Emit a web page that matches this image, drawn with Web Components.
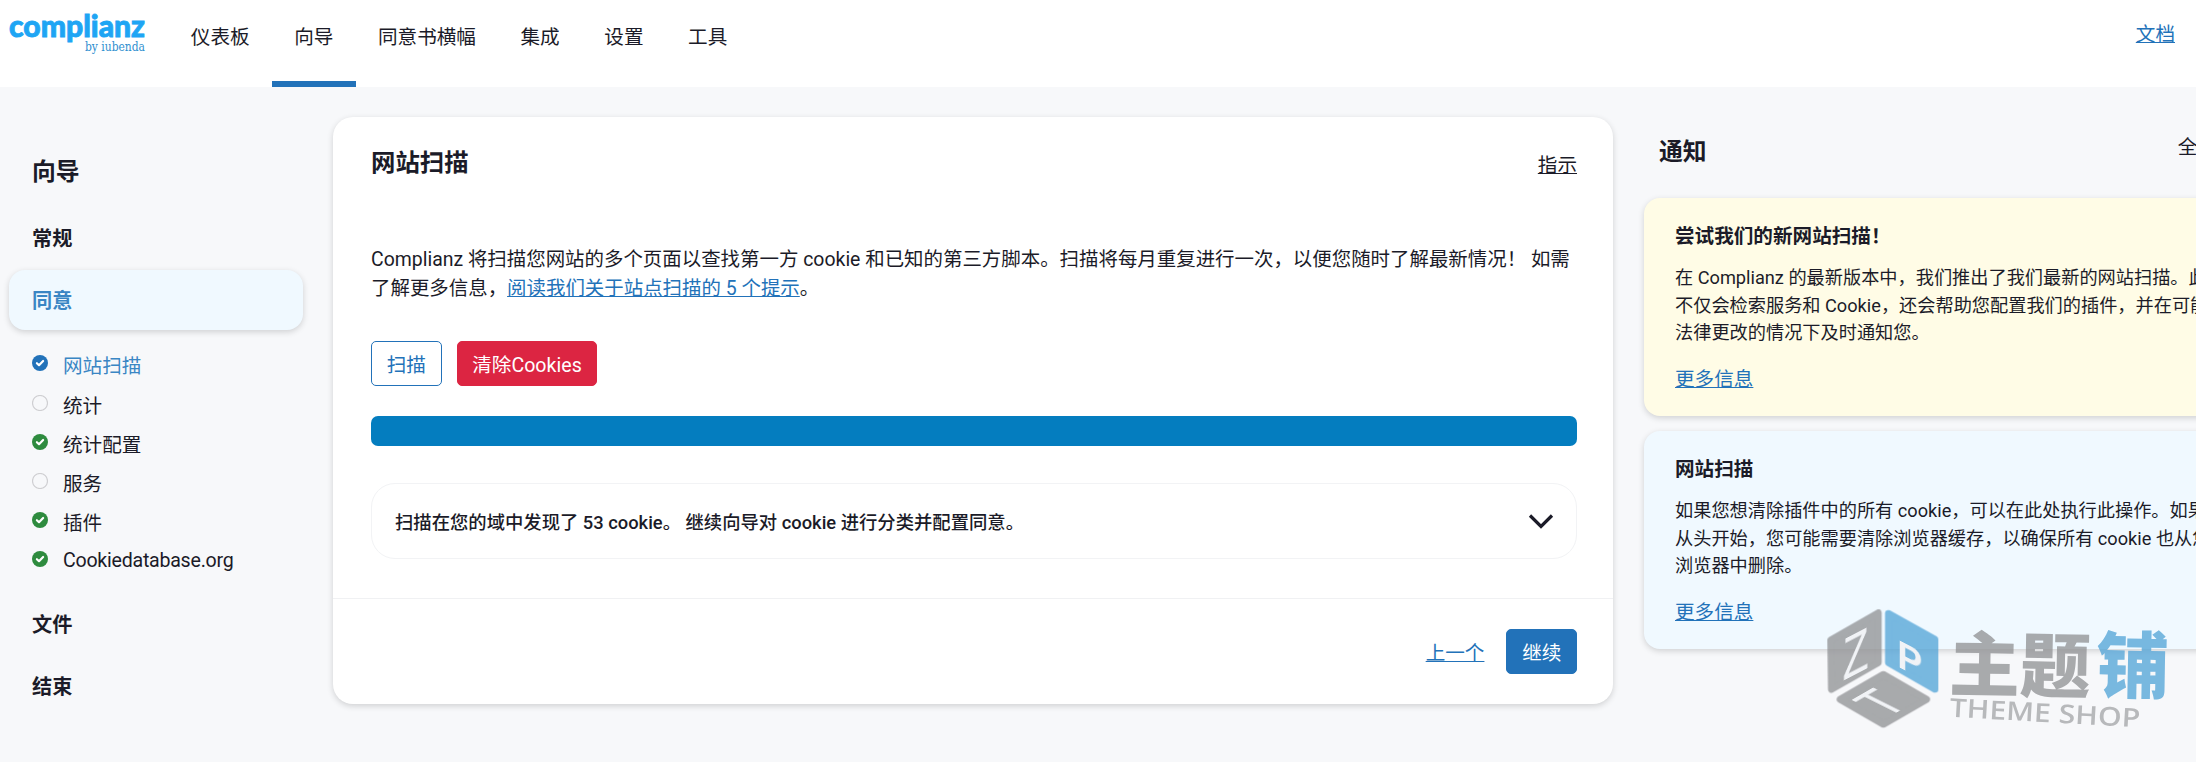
<!DOCTYPE html>
<html lang="zh-CN">
<head>
<meta charset="utf-8">
<title>Complianz</title>
<style>
html,body{margin:0;padding:0;height:762px;overflow:hidden;background:#f7f8fa}
body{font-family:Roboto,"Noto Sans CJK SC",sans-serif;color:#1b1b28;position:relative}
</style>
</head>
<body>
<cz-app>
  <cz-header>
    <cz-nav-item>仪表板</cz-nav-item>
    <cz-nav-item active>向导</cz-nav-item>
    <cz-nav-item>同意书横幅</cz-nav-item>
    <cz-nav-item>集成</cz-nav-item>
    <cz-nav-item>设置</cz-nav-item>
    <cz-nav-item>工具</cz-nav-item>
  </cz-header>
  <cz-layout>
    <cz-sidebar slot="left">
      <cz-menu-item>常规</cz-menu-item>
      <cz-menu-item active>同意</cz-menu-item>
      <cz-steps>
        <cz-step state="current">网站扫描</cz-step>
        <cz-step>统计</cz-step>
        <cz-step state="done">统计配置</cz-step>
        <cz-step>服务</cz-step>
        <cz-step state="done">插件</cz-step>
        <cz-step state="done" style="letter-spacing:-.25px">Cookiedatabase.org</cz-step>
      </cz-steps>
      <cz-menu-item>文件</cz-menu-item>
      <cz-menu-item>结束</cz-menu-item>
    </cz-sidebar>
    <cz-card slot="center">
      <cz-accordion>扫描在您的域中发现了 53 cookie。 继续向导对 cookie 进行分类并配置同意。</cz-accordion>
    </cz-card>
    <cz-notices slot="right">
      <cz-notice tone="warn" heading="尝试我们的新网站扫描！">在 Complianz 的最新版本中，我们推出了我们最新的网站扫描。此<br>不仅会检索服务和 Cookie，还会帮助您配置我们的插件，并在可能<br>法律更改的情况下及时通知您。</cz-notice>
      <cz-notice tone="info" heading="网站扫描">如果您想清除插件中的所有 cookie，可以在此处执行此操作。如果<br>从头开始，您可能需要清除浏览器缓存，以确保所有 cookie 也从您<br>浏览器中删除。</cz-notice>
    </cz-notices>
  </cz-layout>
</cz-app>
<cz-watermark></cz-watermark>
<script>
const def=(name,html)=>customElements.define(name,class extends HTMLElement{
  constructor(){super();this.attachShadow({mode:'open'}).innerHTML=html}
});
def('cz-app',`<style>:host{display:block;width:2196px;height:762px;overflow:hidden}</style><slot></slot>`);
def('cz-logo',`<style>:host{display:block;width:136px;height:40px;flex:none}svg{display:block;overflow:visible}</style>
<svg width="136" height="40" viewBox="0 0 136 40">
<text x="0" y="22" font-family="Lato" font-weight="900" font-size="31" fill="#1ea5f4" stroke="#1ea5f4" stroke-width=".9" textLength="136" lengthAdjust="spacingAndGlyphs">complianz</text>
<text x="76" y="36" font-family="DejaVu Serif" font-size="13" fill="#2f8fcf" textLength="60" lengthAdjust="spacingAndGlyphs">by iubenda</text>
</svg>`);
def('cz-header',`<style>
:host{display:flex;height:87px;background:#fff;padding-left:9px;box-sizing:border-box;align-items:flex-start}
cz-logo{margin-top:15px;margin-right:23.5px}
nav{display:flex}
a{margin-left:auto;padding:22px 21px 0 0;font-size:19.6px;line-height:26px;color:#2272b9;text-decoration:underline}
</style><cz-logo></cz-logo><nav><slot></slot></nav><a>文档</a>`);
def('cz-nav-item',`<style>
:host{display:flex;align-items:center;height:87px;box-sizing:border-box;padding:0 22.3px 10px;border-bottom:6px solid transparent;font-size:19.6px;color:#1b1b28}
:host([active]){border-bottom-color:#2272b9}
</style><slot></slot>`);
def('cz-layout',`<style>
:host{display:grid;grid-template-columns:294px 1280px 590px;column-gap:30px;padding:30px 0 0 9px;align-items:start}
</style><slot name="left"></slot><slot name="center"></slot><slot name="right"></slot>`);
def('cz-sidebar',`<style>
:host{display:block;padding-top:30px}
h2{margin:0 0 11px;padding-left:23px;font-size:23.8px;line-height:50px;font-weight:700}
</style><h2>向导</h2><slot></slot>`);
def('cz-menu-item',`<style>
:host{display:flex;align-items:center;height:60px;margin-bottom:2px;padding:0 0 2px 23px;border-radius:16px;font-size:20.2px;font-weight:700;box-sizing:border-box}
:host([active]){background:#f0f9ff;color:#3a86c4;box-shadow:0 2px 6px rgba(0,0,0,.16)}
</style><slot></slot>`);
def('cz-steps',`<style>:host{display:block;padding:13.4px 0 14.4px}</style><slot></slot>`);
def('cz-step',`<style>
:host{display:flex;align-items:center;gap:15px;height:39.2px;padding-left:23px;font-size:19.6px}
:host([state=current]){color:#3a86c4}
svg{flex:none;display:block;margin-top:-3px}
.ring{fill:none;stroke:#cfcfd2;stroke-width:1.2}
:host([state=done]) .ring,:host([state=current]) .ring{stroke:none;r:8px}
:host([state=done]) .ring{fill:#2e8b3e}
:host([state=current]) .ring{fill:#2272b9}
.tick{display:none;fill:none;stroke:#fff;stroke-width:2.2;stroke-linecap:round;stroke-linejoin:round}
:host([state]) .tick{display:block}
</style>
<svg width="16" height="16" viewBox="0 0 16 16"><circle class="ring" cx="8" cy="8" r="7.5"/><path class="tick" d="M4.9 8.2 7 10.2 11.1 6"/></svg><span><slot></slot></span>`);
def('cz-button',`<style>
:host{display:inline-flex;align-items:center;justify-content:center;height:45px;padding:0 14.7px;box-sizing:border-box;border-radius:5px;font-size:19.6px;border:1px solid #2272b9;color:#2272b9;background:#fff}
:host([tone=danger]){background:#dc2542;border-color:#dc2542;color:#fff}
:host([tone=primary]){background:#2272b9;border-color:#2272b9;color:#fff}
</style><slot></slot>`);
def('cz-accordion',`<style>
:host{display:flex;align-items:center;justify-content:space-between;height:76px;box-sizing:border-box;border:1px solid #f2f3f5;border-radius:24px;padding:0 22px 0 23px;font-size:18.33px;font-weight:500}
svg{display:block}
</style><span><slot></slot></span><svg width="26" height="16" viewBox="0 0 26 16"><path d="M2 2.5 13 13.5 24 2.5" fill="none" stroke="#1b1b28" stroke-width="3.2"/></svg>`);
def('cz-card',`<style>
:host{display:block;height:587px;background:#fff;border-radius:20px;box-shadow:0 2px 6px rgba(0,0,0,.16);box-sizing:border-box}
.pad{padding:29px 36px 0 38px}
header{display:flex;justify-content:space-between;align-items:center;height:34px}
h1{margin:0;font-size:24.4px;line-height:34px;font-weight:700}
.hint{font-size:19.6px;text-decoration:underline}
p{margin:65px 0 0;font-size:19.45px;line-height:29px;white-space:nowrap}
a{color:#2272b9;text-decoration:underline}
.btns{display:flex;gap:15px;margin-top:38px}
.bar{height:30px;margin:30px 0 37px;background:#047dbf;border-radius:7px}
.sep{height:1px;background:#f0f1f3;margin-top:39px}
footer{display:flex;justify-content:flex-end;align-items:center;gap:22px;padding:30px 36px 0 0}
footer a{font-size:19.6px}
</style>
<div class="pad">
<header><h1>网站扫描</h1><span class="hint">指示</span></header>
<p>Complianz 将扫描您网站的多个页面以查找第一方 cookie 和已知的第三方脚本。扫描将每月重复进行一次，以便您随时了解最新情况！ 如需<br>了解更多信息，<a>阅读我们关于站点扫描的 5 个提示</a>。</p>
<div class="btns"><cz-button>扫描</cz-button><cz-button tone="danger">清除Cookies</cz-button></div>
<div class="bar"></div>
<slot></slot>
</div>
<div class="sep"></div>
<footer><a>上一个</a><cz-button tone="primary">继续</cz-button></footer>`);
def('cz-notices',`<style>
:host{display:block;padding:15px 0 0 1px}
header{display:flex;justify-content:space-between;align-items:flex-start;padding:0 16px 0 15px;height:40px;margin-bottom:26px}
h2{margin:0;font-size:23.8px;line-height:40px;font-weight:700}
span{font-size:19.6px;line-height:32px}
</style><header><h2>通知</h2><span>全部</span></header><slot></slot>`);
customElements.define('cz-notice',class extends HTMLElement{
  constructor(){super();const s=this.attachShadow({mode:'open'});
  s.innerHTML=`<style>
:host{display:block;margin-bottom:15px;padding:25px 0 24px 31px;border-radius:16px;box-shadow:0 2px 6px rgba(0,0,0,.16);white-space:nowrap}
:host([tone=warn]){background:#fffce6}
:host([tone=info]){background:#f0f9ff}
h3{margin:0 0 13px;font-size:19.6px;line-height:28px;font-weight:700}
.b{font-size:18.2px;line-height:27.5px}
a{display:block;margin-top:19.5px;margin-bottom:-2px;font-size:19.6px;line-height:28px;color:#2272b9;text-decoration:underline}
</style><h3></h3><div class="b"><slot></slot></div><a>更多信息</a>`;}
  connectedCallback(){this.shadowRoot.querySelector('h3').textContent=this.getAttribute('heading')}
});
def('cz-watermark',`<style>
:host{position:absolute;left:1800px;top:540px;width:396px;height:222px;pointer-events:none}
svg{display:block}
text{font-family:"Noto Sans CJK SC",sans-serif}
.l{font-family:"Liberation Sans",sans-serif;fill:#f1f3f6}
</style>
<svg width="396" height="222" viewBox="0 0 1188 666">
<g opacity=".76" stroke-linejoin="round">
<path d="M92 300 235 218V368L94 448Z" fill="#8f9093" stroke="#8f9093" stroke-width="20"/>
<path d="M265 220 405 298V448L265 368Z" fill="#50a3d7" stroke="#50a3d7" stroke-width="20"/>
<path d="M250 403 380 478 250 553 120 478Z" fill="#8f9093" stroke="#8f9093" stroke-width="20"/>
<text transform="translate(446 450) rotate(1)" font-size="212" font-weight="900" fill="#8f9093" textLength="425" lengthAdjust="spacingAndGlyphs">主题</text>
<text transform="translate(888 455) rotate(1)" font-size="218" font-weight="900" fill="#50a3d7">铺</text>
<text transform="translate(448 530) rotate(3.2)" font-size="78" font-weight="600" fill="#a3a4a7" style="font-family:'Open Sans',sans-serif" textLength="572" lengthAdjust="spacingAndGlyphs">THEME SHOP</text>
</g>
<text class="l" transform="matrix(1 -.52 0 1 128 422)" font-size="175" textLength="78" lengthAdjust="spacingAndGlyphs">Z</text>
<text class="l" transform="matrix(1 .52 0 1 292 378)" font-size="118" font-weight="700" textLength="75" lengthAdjust="spacingAndGlyphs">P</text>
<text class="l" transform="matrix(1.14 -.656 1.536 .768 260 535)" font-size="100">T</text>
</svg>`);
</script>
</body>
</html>
